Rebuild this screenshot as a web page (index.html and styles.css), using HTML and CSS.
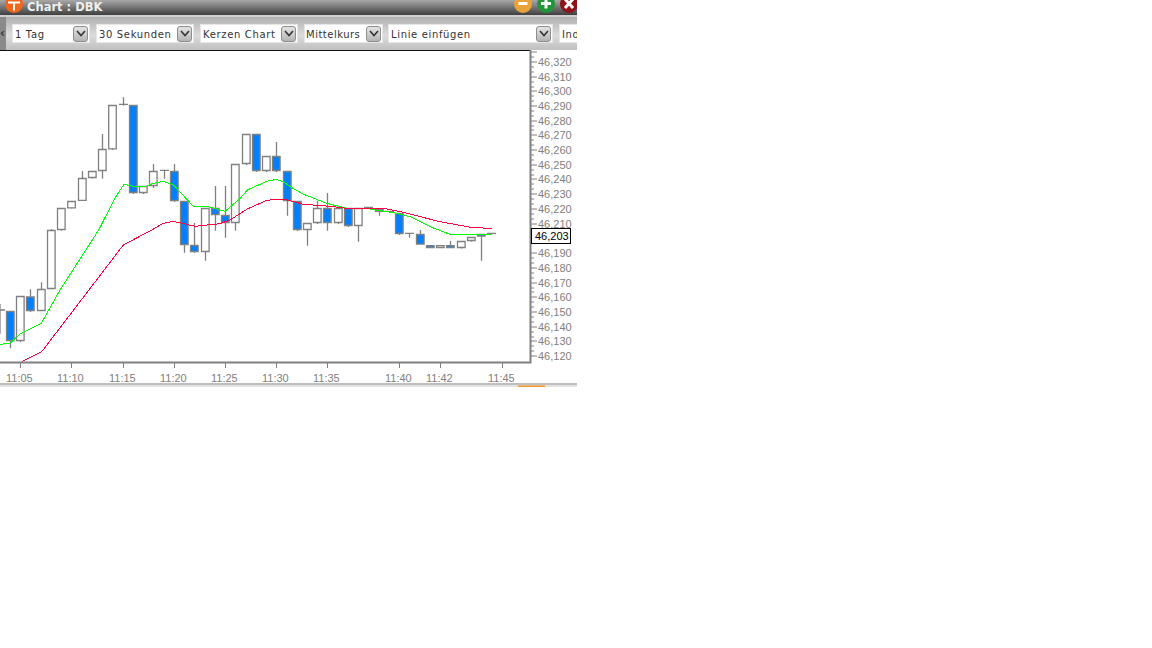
FILE: index.html
```html
<!DOCTYPE html>
<html lang="de">
<head>
<meta charset="utf-8">
<title>Chart : DBK</title>
<link rel="stylesheet" href="styles.css">
</head>
<body>
<div class="window">
  <header class="titlebar">
    <svg class="orb app" viewBox="0 0 18 18"><circle cx="9" cy="9" r="9" fill="#f0661c"/><path d="M3 7.5h12M9 7.5v8" stroke="#fff" stroke-width="2" fill="none"/></svg>
    <span class="title">Chart : DBK</span>
    <span class="spacer"></span>
    <svg class="orb" viewBox="0 0 18 18"><circle cx="9" cy="9" r="9" fill="#e8a33a"/><path d="M4.5 8.5h9" stroke="#fff" stroke-width="3" fill="none"/></svg>
    <svg class="orb" viewBox="0 0 18 18"><circle cx="9" cy="9" r="9" fill="#23963a"/><path d="M4 8.5h10M9 3.5v10" stroke="#fff" stroke-width="3" fill="none"/></svg>
    <svg class="orb" viewBox="0 0 18 18"><circle cx="9" cy="9" r="9" fill="#8e1218"/><path d="M5 4l8 9M13 4l-8 9" stroke="#fff" stroke-width="3" fill="none"/></svg>
  </header>
  <nav class="toolbar">
    <div class="scroll-left">‹</div>
    <div class="select w-tag"><span class="label">1 Tag</span><span class="drop"><svg viewBox="0 0 10 7"><path d="M1 1l4 4.5L9 1" fill="none" stroke="#333" stroke-width="1.6"/></svg></span></div>
    <div class="select w-sek"><span class="label">30 Sekunden</span><span class="drop"><svg viewBox="0 0 10 7"><path d="M1 1l4 4.5L9 1" fill="none" stroke="#333" stroke-width="1.6"/></svg></span></div>
    <div class="select w-kerz"><span class="label">Kerzen Chart</span><span class="drop"><svg viewBox="0 0 10 7"><path d="M1 1l4 4.5L9 1" fill="none" stroke="#333" stroke-width="1.6"/></svg></span></div>
    <div class="select w-mit"><span class="label">Mittelkurs</span><span class="drop"><svg viewBox="0 0 10 7"><path d="M1 1l4 4.5L9 1" fill="none" stroke="#333" stroke-width="1.6"/></svg></span></div>
    <div class="select w-lin"><span class="label">Linie einfügen</span><span class="drop"><svg viewBox="0 0 10 7"><path d="M1 1l4 4.5L9 1" fill="none" stroke="#333" stroke-width="1.6"/></svg></span></div>
    <div class="select w-ind"><span class="label">Ind</span></div>
  </nav>
  <svg class="chart" viewBox="0 50 577 337" width="577" height="337">
    <path class="frame-top" d="M0 50.5H531"/>
    <path class="wick" d="M51.5 229V231M61.5 229V230.5M71.5 207V208.5M82.5 171V201M92.5 177V178.5M102.5 134V178.7M112.5 148V150M123.5 97.3V105.7M119 104.3H128M133.5 192V194M143.5 192V194M153.5 164V188M164.5 170V178.7M160 170.3H169M174.5 164V202M184.5 244V252.7M194.5 223V252.7M205.5 251V260.7M215.5 186V230.7M225.5 186V237.7M235.5 222V230.7M246.5 163V165M256.5 170V172M266.5 170V172M276.5 142V172M287.5 200V215.7M297.5 229V231M307.5 229V245.7M317.5 200.7V224M327.5 193V230.7M338.5 222V224M348.5 225V227M358.5 225V241.7M364 207.3H373M368.5 207.3V208.5M379.5 211V215.7M385 211.3H394M389.5 211.3V212.7M399.5 233V235M405 233.3H414M409.5 233.3V237.7M420.5 230V244M430.5 247V248M440.5 247V248M450.5 241V247M461.5 247V248.5M471.5 240V241.5M481.5 236V260.7M487 233.3H496M491.5 233.3V235M0 304V333.7M0 310H5M41.5 282.3V311M30.5 289.3V312M20.5 340V342M10.5 340V348.3"/>
    <path class="body-white" d="M47.5 230.5h7.6v58h-7.6zM57.5 208.5h7.6v21h-7.6zM67.7 201.5h7.6v6.3h-7.6zM78.5 178.5h7.6v21.8h-7.6zM88.5 171.5h7.6v6h-7.6zM98.5 149.5h7.6v21h-7.6zM108.7 105.5h7.6v43.3h-7.6zM139.5 186.5h7.6v6h-7.6zM149.5 171.5h7.6v14h-7.6zM201.5 208.5h7.6v43h-7.6zM231.5 164.5h7.6v58h-7.6zM242.5 134.5h7.6v29h-7.6zM262.5 156.5h7.6v14h-7.6zM303.5 223.5h7.6v6h-7.6zM313.5 208.5h7.6v14h-7.6zM334.5 208.5h7.6v14h-7.6zM354.5 208.5h7.6v17h-7.6zM436.5 245.7h7.6v1.8h-7.6zM457.5 241.5h7.6v6h-7.6zM467.5 237.5h7.6v3h-7.6zM37.5 289.5h7.6v21h-7.6zM16.5 296.5h7.6v44h-7.6z"/>
    <path class="body-blue" d="M129.5 105.5h7.6v87h-7.6zM170.5 171.5h7.6v29h-7.6zM180.5 201.5h7.6v43h-7.6zM190.5 245.5h7.6v6h-7.6zM211.5 208.5h7.6v6h-7.6zM221.5 215.5h7.6v7h-7.6zM252.5 134.5h7.6v36h-7.6zM272.5 156.5h7.6v14h-7.6zM283.5 171.5h7.6v29h-7.6zM293.5 201.5h7.6v28h-7.6zM323.5 208.5h7.6v14h-7.6zM344.5 208.5h7.6v17h-7.6zM375.5 209.7h7.6v1.6h-7.6zM395.5 213.5h7.6v20h-7.6zM416.5 234.5h7.6v9.6h-7.6zM426.5 245.7h7.6v1.8h-7.6zM446.5 245.7h7.6v1.8h-7.6zM477.5 234.5h7.6v1.6h-7.6zM26.5 297h7.6v13.5h-7.6zM6.5 311.5h7.6v29h-7.6z"/>
    <polyline class="line-green" points="0,344.3 10,343.3 20,334 41.3,323.3 60,290 98.7,230 115,198 124,184.3 133.3,186.3 146.7,186 153.3,183.3 163.3,181.3 173.3,184.7 193.3,206.3 206.7,206.3 225,211.3 240,198.7 247.3,190 266.7,181.3 276,179.3 283,181.7 293,188.3 303,194 326.7,203.3 346.7,208.3 370,209 396.7,213.3 411.7,217.3 430,226.7 450,234.3 491.7,235"/>
    <polyline class="line-red" points="21.7,361.7 41.7,351.7 123.3,245 151.7,230 163.3,223.3 173.3,221.3 195,226.3 220,223.7 230,220 247.3,209 266.7,200.3 276.7,199.3 285,199.3 303.3,204.3 330,206.3 346.7,208.3 383.3,208.3 403.3,212.3 440,221.7 473.3,227.7 491.7,228.3"/>
    <path class="axis" d="M530.5 50V362.5H0"/>
    <path class="tick" d="M531 52H537M531 57H534M531 62H537M531 67H534M531 72H534M531 77H537M531 82H534M531 87H534M531 91H537M531 96H534M531 101H534M531 106H537M531 111H534M531 116H534M531 121H537M531 126H534M531 130H534M531 135H537M531 140H534M531 145H534M531 150H537M531 155H534M531 160H534M531 165H537M531 170H534M531 175H534M531 179H537M531 184H534M531 189H534M531 194H537M531 199H534M531 204H534M531 209H537M531 214H534M531 219H534M531 224H537M531 253H537M531 258H534M531 263H534M531 268H537M531 273H534M531 278H534M531 283H537M531 288H534M531 292H534M531 297H537M531 302H534M531 307H534M531 312H537M531 317H534M531 322H534M531 327H537M531 332H534M531 337H534M531 341H537M531 346H534M531 351H534M531 356H537M20.5 363V368M71.5 363V368M123.5 363V368M174.5 363V368M225.5 363V368M276.5 363V368M327.5 363V368M399.5 363V368M440.5 363V368M502.5 363V368"/>
    <g class="ylabels">
      <text x="538" y="66">46,320</text><text x="538" y="81">46,310</text><text x="538" y="95">46,300</text><text x="538" y="110">46,290</text><text x="538" y="125">46,280</text><text x="538" y="139">46,270</text><text x="538" y="154">46,260</text><text x="538" y="169">46,250</text><text x="538" y="183">46,240</text><text x="538" y="198">46,230</text><text x="538" y="213">46,220</text><text x="538" y="228">46,210</text><text x="538" y="257">46,190</text><text x="538" y="272">46,180</text><text x="538" y="287">46,170</text><text x="538" y="301">46,160</text><text x="538" y="316">46,150</text><text x="538" y="331">46,140</text><text x="538" y="345">46,130</text><text x="538" y="360">46,120</text>
    </g>
    <rect class="price-box" x="531.5" y="228.5" width="39" height="15"/>
    <text class="price" x="535" y="240">46,203</text>
    <g class="xlabels">
      <text x="6" y="382">11:05</text><text x="57" y="382">11:10</text><text x="109" y="382">11:15</text><text x="160" y="382">11:20</text><text x="211" y="382">11:25</text><text x="262" y="382">11:30</text><text x="313" y="382">11:35</text><text x="385" y="382">11:40</text><text x="426" y="382">11:42</text><text x="488" y="382">11:45</text>
    </g>
    <path class="foot" d="M0 384H577"/>
    <path class="foot-light" d="M0 386H577"/>
    <path class="foot-tab" d="M518 386.2H545"/>
  </svg>
</div>
</body>
</html>
```
FILE: styles.css
```css
html, body {
  margin: 0;
  padding: 0;
  background: #fff;
}

.window {
  width: 577px;
  height: 387px;
  overflow: hidden;
  display: flex;
  flex-direction: column;
}

.titlebar {
  height: 15px;
  flex: none;
  display: flex;
  align-items: flex-end;
  gap: 5px;
  padding-left: 5px;
  background: linear-gradient(#a8a8a8, #3f3f3f);
  border-bottom: 2px solid #cfcfcf;
  overflow: hidden;
}

.orb {
  width: 18px;
  height: 18px;
  flex: none;
  margin-bottom: 2px;
}

.orb:last-child {
  margin-right: -1px;
}

.app {
  margin-right: -1px;
}

.title {
  color: #efefef;
  font: bold 11.5px "DejaVu Sans", sans-serif;
  line-height: 13px;
  margin-bottom: 1px;
}

.spacer {
  flex: 1;
}

.toolbar {
  height: 33px;
  flex: none;
  display: flex;
  align-items: center;
  gap: 6px;
  background: linear-gradient(#b0b0b0, #c4c4c4 25%, #dcdcdc 55%, #c0c0c0);
  overflow: hidden;
}

.scroll-left {
  width: 6px;
  height: 33px;
  flex: none;
  background: #8a8a8a;
  color: #333;
  font: bold 12px/33px "DejaVu Sans", sans-serif;
  text-align: left;
}

.select {
  height: 19px;
  flex: none;
  box-sizing: border-box;
  display: flex;
  align-items: center;
  justify-content: space-between;
  background: #fff;
  border: 1px solid #e6e6e6;
  padding: 0 1px 0 2px;
}

.label {
  font: 10px "DejaVu Sans", sans-serif;
  letter-spacing: 0.65px;
  color: #333;
  white-space: nowrap;
  padding-top: 2px;
}

.drop {
  width: 15px;
  height: 16px;
  box-sizing: border-box;
  border: 1px solid #8d8d8d;
  border-radius: 3px;
  background: linear-gradient(#e4e4e4, #b4b4b4);
  display: flex;
  align-items: center;
  justify-content: center;
}

.drop svg {
  width: 10px;
  height: 7px;
}

.w-tag { width: 78px; }
.w-sek { width: 98px; }
.w-kerz { width: 98px; }
.w-mit { width: 79px; padding-left: 1px; }
.w-mit .label { letter-spacing: 0.5px; }
.w-lin { width: 165px; margin-left: -1px; }
.w-ind { width: 24px; }

.chart {
  display: block;
  flex: none;
  background: #fff;
}

.frame-top {
  stroke: #111;
  stroke-width: 1;
  fill: none;
}

.wick {
  stroke: #808080;
  stroke-width: 1.3;
  fill: none;
}

.body-white {
  fill: #fff;
  stroke: #808080;
  stroke-width: 1.3;
}

.body-blue {
  fill: #0080ff;
  stroke: #808080;
  stroke-width: 1.3;
}

.line-green {
  fill: none;
  stroke: #00ff00;
  stroke-width: 1;
  shape-rendering: crispEdges;
}

.line-red {
  fill: none;
  stroke: #ff0040;
  stroke-width: 1;
  shape-rendering: crispEdges;
}

.axis {
  fill: none;
  stroke: #808080;
  stroke-width: 2;
}

.tick {
  fill: none;
  stroke: #808080;
  stroke-width: 1;
}

.ylabels text,
.xlabels text {
  font: 11px "Liberation Sans", Arial, sans-serif;
  fill: #808080;
}

.price-box {
  fill: #fff;
  stroke: #000;
  stroke-width: 1;
}

.price {
  font: 11px "Liberation Sans", Arial, sans-serif;
  fill: #000;
}

.foot {
  stroke: #a8a8a8;
  stroke-width: 1.5;
}

.foot-light {
  stroke: #e2e2e2;
  stroke-width: 2;
}

.foot-tab {
  stroke: #f09a30;
  stroke-width: 1.6;
}
```
